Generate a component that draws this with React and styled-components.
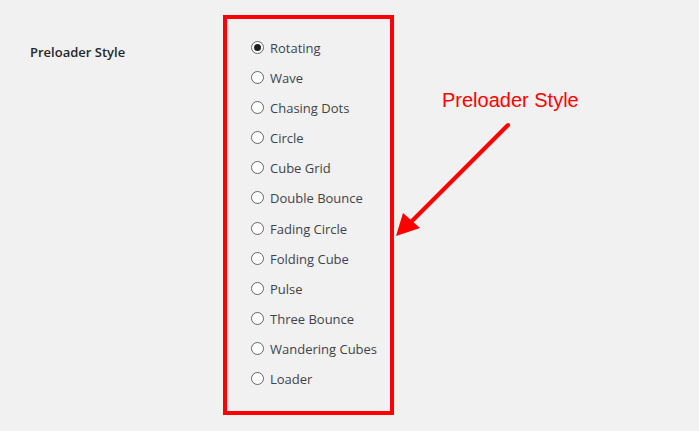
import React, { useState } from "react";
import styled, { createGlobalStyle } from "styled-components";

const GlobalStyle = createGlobalStyle`
  html, body {
    margin: 0;
    padding: 0;
    background: #f1f1f1;
  }
  body {
    font-family: "Open Sans", "Noto Sans", sans-serif;
    color: #32373c;
  }
`;

const Page = styled.div`
  position: relative;
  width: 699px;
  height: 431px;
  box-sizing: border-box;
  padding: 15px 0 0 30px;
  display: flex;
  align-items: flex-start;
`;

const Label = styled.div`
  width: 193px;
  padding-top: 29px;
  font-size: 13px;
  font-weight: 600;
  color: #23282d;
  line-height: 16px;
`;

const Highlight = styled.div`
  width: 171px;
  height: 400px;
  box-sizing: border-box;
  border: 4px solid #ff0000;
  padding: 20.5px 0 0 24px;
  display: flex;
  flex-direction: column;
`;

const Option = styled.label`
  height: 30.18px;
  flex-shrink: 0;
  display: flex;
  align-items: flex-start;
  gap: 6px;
  font-size: 13px;
  line-height: 16px;
  color: #3e444a;
  cursor: pointer;
`;

const Dot = styled.span`
  width: 13px;
  height: 13px;
  margin-top: 1px;
  box-sizing: border-box;
  border-radius: 50%;
  border: 1px solid #666;
  background: #fff;
  display: flex;
  align-items: center;
  justify-content: center;
  flex-shrink: 0;

  &::after {
    content: "";
    width: 7px;
    height: 7px;
    border-radius: 50%;
    background: ${(p) => (p.$checked ? "#1e1e1e" : "transparent")};
  }
`;

const Note = styled.div`
  position: absolute;
  left: 442px;
  top: 89px;
  font-family: "Liberation Sans", Arial, sans-serif;
  font-size: 20px;
  line-height: 23px;
  color: #ff0000;
`;

const Arrow = styled.svg`
  position: absolute;
  left: 0;
  top: 0;
  pointer-events: none;
`;

const styles = [
  "Rotating",
  "Wave",
  "Chasing Dots",
  "Circle",
  "Cube Grid",
  "Double Bounce",
  "Fading Circle",
  "Folding Cube",
  "Pulse",
  "Three Bounce",
  "Wandering Cubes",
  "Loader",
];

export default function App() {
  const [current, setCurrent] = useState("Rotating");

  return (
    <>
      <GlobalStyle />
      <Page>
        <Label>Preloader Style</Label>
        <Highlight>
          {styles.map((s) => (
            <Option key={s} onClick={() => setCurrent(s)}>
              <Dot $checked={current === s} />
              {s}
            </Option>
          ))}
        </Highlight>
        <Note>Preloader Style</Note>
        <Arrow width="699" height="431">
          <line x1="508" y1="125" x2="408" y2="225" stroke="#ff0000" strokeWidth="4" strokeLinecap="round" />
          <polygon points="396,236 403,213 420,228" fill="#ff0000" />
        </Arrow>
      </Page>
    </>
  );
}
